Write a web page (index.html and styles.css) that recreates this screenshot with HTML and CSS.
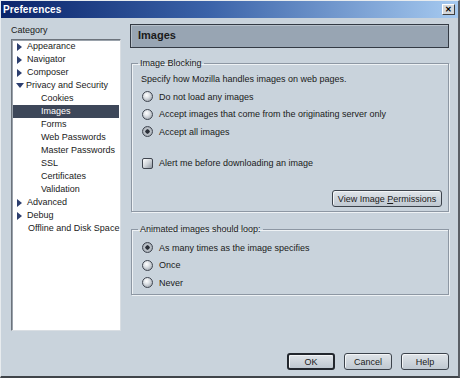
FILE: index.html
```html
<!DOCTYPE html>
<html lang="en">
<head>
<meta charset="utf-8">
<title>Preferences</title>
<link rel="stylesheet" href="styles.css">
</head>
<body>
<div class="win">
  <div class="titlebar">
    <span class="title">Preferences</span>
    <span class="close">&#x2715;</span>
  </div>
  <div class="content">
    <div class="side">
      <div class="cat-label">Category</div>
      <ul class="tree">
        <li class="top"><span class="tw right"></span>Appearance</li>
        <li class="top"><span class="tw right"></span>Navigator</li>
        <li class="top"><span class="tw right"></span>Composer</li>
        <li class="top"><span class="tw down"></span>Privacy and Security</li>
        <li class="sub">Cookies</li>
        <li class="sub sel">Images</li>
        <li class="sub">Forms</li>
        <li class="sub">Web Passwords</li>
        <li class="sub">Master Passwords</li>
        <li class="sub">SSL</li>
        <li class="sub">Certificates</li>
        <li class="sub">Validation</li>
        <li class="top"><span class="tw right"></span>Advanced</li>
        <li class="top"><span class="tw right"></span>Debug</li>
        <li class="leaf">Offline and Disk Space</li>
      </ul>
    </div>
    <div class="main">
      <div class="head">Images</div>
      <fieldset class="grp grp-block">
        <legend>Image Blocking</legend>
        <p class="desc">Specify how Mozilla handles images on web pages.</p>
        <div class="opt"><span class="radio"></span>Do not load any images</div>
        <div class="opt"><span class="radio"></span>Accept images that come from the originating server only</div>
        <div class="opt"><span class="radio on"></span>Accept all images</div>
        <div class="opt chk-row"><span class="check"></span>Alert me before downloading an image</div>
        <div class="grp-foot"><button class="btn wide">View Image <u>P</u>ermissions</button></div>
      </fieldset>
      <fieldset class="grp grp-anim">
        <legend>Animated images should loop:</legend>
        <div class="opt"><span class="radio on"></span>As many times as the image specifies</div>
        <div class="opt"><span class="radio"></span>Once</div>
        <div class="opt"><span class="radio"></span>Never</div>
      </fieldset>
    </div>
  </div>
  <div class="foot">
    <button class="btn def">OK</button>
    <button class="btn">Cancel</button>
    <button class="btn">Help</button>
  </div>
</div>
</body>
</html>
```

FILE: styles.css
```css
:root{
  --face:#c9d3dc; --ink:#1a1a1a; --dark:#3b4350;
  --etch-d:#8d97a3; --etch-l:#eef2f5;
}
*{box-sizing:border-box;}
html,body{margin:0;padding:0;}
body{
  font-family:'Liberation Sans',Arial,sans-serif;
  font-size:9px;
  color:var(--ink);
  width:460px; height:378px; overflow:hidden;
}
.win{
  width:460px; height:378px;
  background:var(--face);
  border-left:1px solid #e8ecef;
  border-top:1px solid #e8ecef;
  border-right:2px solid #5a5f66;
  border-bottom:2px solid #404449;
  display:flex; flex-direction:column;
}

/* title bar */
.titlebar{
  height:17px; flex-shrink:0;
  background:linear-gradient(90deg,#0a246a 0%,#3a62a8 45%,#a6caf0 100%);
  display:flex; align-items:center; justify-content:space-between;
  padding:0 3px 0 2px;
}
.title{ color:#fff; font-weight:700; font-size:10px; letter-spacing:.1px; }
.close{
  width:13px; height:11px; background:#d4d8dc;
  border:1px solid; border-color:#fff #404040 #404040 #fff;
  font-size:8px; font-weight:700; line-height:9px; text-align:center; color:#000;
}

.content{ flex:1; display:flex; gap:9px; padding:6px 9px 0 10px; }

/* left category tree */
.side{ width:110px; flex-shrink:0; display:flex; flex-direction:column; }
.cat-label{ height:15px; line-height:13px; }
.tree{
  list-style:none; margin:0; padding:0;
  height:292px; background:#fff;
  border:1px solid; border-color:#6c737c #d9dee3 #d9dee3 #6c737c;
  box-shadow:inset 1px 1px 0 #9aa2ab;
}
.tree li{ height:13px; line-height:13px; white-space:nowrap; display:flex; align-items:center; }
.tree .top{ padding-left:4px; }
.tree .sub{ padding-left:29px; }
.tree .leaf{ padding-left:16px; }
.tree .sel{ background:#3d4759; color:#fff; margin:0 1px; padding-left:28px; }
.tw{ display:inline-block; width:0; height:0; margin-right:5px; }
.tw.right{ border-top:4px solid transparent; border-bottom:4px solid transparent; border-left:5px solid #2c3e6e; margin-left:1px; }
.tw.down{ border-left:4px solid transparent; border-right:4px solid transparent; border-top:5px solid #2c3e6e; margin-right:2px; }

/* right panel */
.main{ flex:1; display:flex; flex-direction:column; }
.head{
  height:24px;
  background:#98a5b3;
  border:1px solid #333a44;
  box-shadow:inset 1px 1px 0 #b6c0ca;
  font-weight:700; font-size:11px; line-height:21px; padding-left:7px;
}
.grp{
  margin:8px 0 0 1px; padding:0 6px 4px 9px;
  border:1px solid var(--etch-d);
  box-shadow:1px 1px 0 var(--etch-l), inset 1px 1px 0 var(--etch-l);
}
.grp legend{ padding:0 2px; margin-left:-3px; line-height:12px; }
.grp-block{ height:155px; margin-top:9px; }
.grp-anim{ height:72px; margin-top:11px; }
.desc{ margin:4px 0 2px; line-height:13px; }
.opt{ height:17.5px; display:flex; align-items:center; padding-left:1px; }
.chk-row{ margin-top:14px; }
.grp-anim .opt:first-of-type{ margin-top:4px; }
.radio{
  width:11px; height:11px; border-radius:50%; margin-right:6px; flex-shrink:0;
  background:radial-gradient(circle at 40% 35%,#fff 0,#dfe3e7 35%,#8e96a0 100%);
  border:1px solid #404650;
}
.radio.on{ background:radial-gradient(circle,#2a2f38 0,#2a2f38 30%,#c3c9cf 38%,#8e96a0 100%); }
.check{
  width:11px; height:11px; margin-right:6px; flex-shrink:0; border-radius:2px;
  background:linear-gradient(135deg,#fff 0,#d0d5da 50%,#8e96a0 100%);
  border:1px solid #404650;
}
.grp-foot{ display:flex; justify-content:flex-end; margin-top:18px; }

.btn{
  font-family:inherit; font-size:9px; color:var(--ink);
  height:17px; padding:0; border-radius:3px;
  background:linear-gradient(#dfe4e9,#bfc8d1);
  border:1px solid #3c434c;
  box-shadow:inset 1px 1px 0 #f3f5f7;
}
.btn.wide{ width:110px; }
.btn u{ text-decoration:underline; }

.foot{ height:28px; flex-shrink:0; display:flex; justify-content:flex-end; align-items:flex-start; gap:9px; padding:5px 9px 0 0; }
.foot .btn{ width:48px; }
.foot .btn.def{ border:2px solid #22272e; }
```
